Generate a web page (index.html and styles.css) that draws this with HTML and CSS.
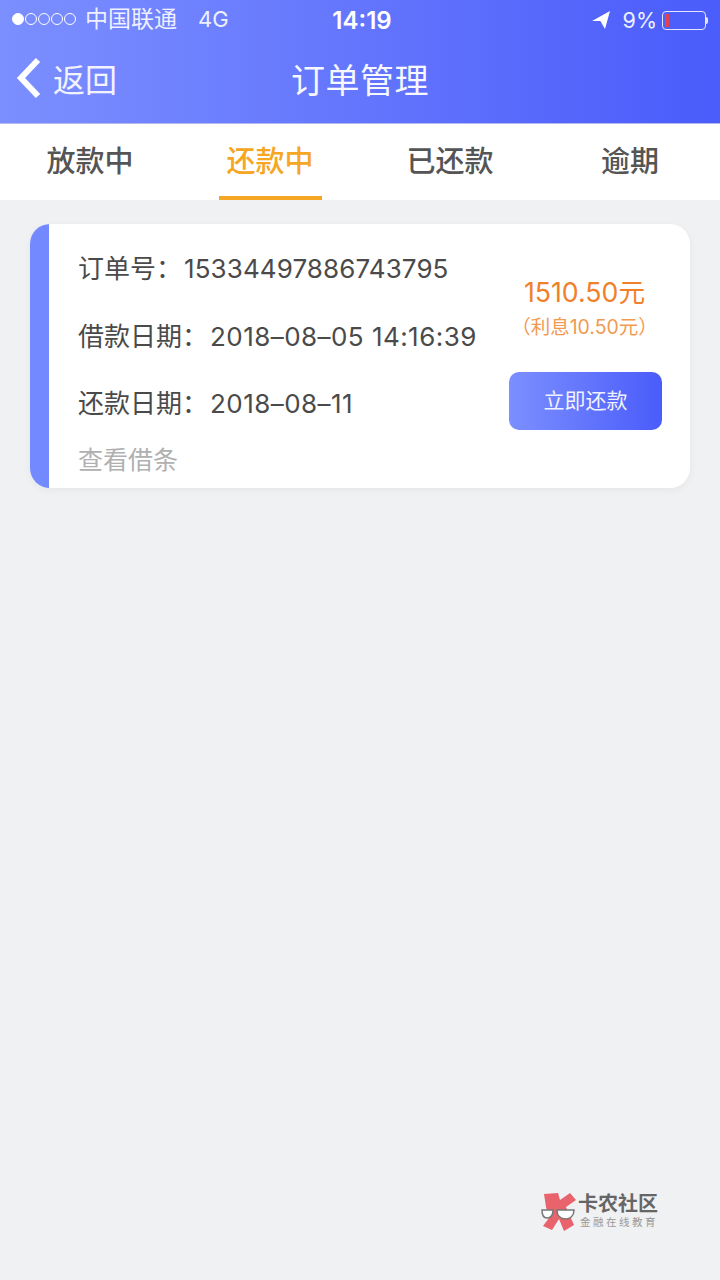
FILE: index.html
```html
<!DOCTYPE html>
<html lang="zh-CN">
<head>
<meta charset="utf-8">
<title>订单管理</title>
<link rel="stylesheet" href="styles.css">
</head>
<body>
<div class="page">
  <header class="header">
    <div class="status">
      <div class="status-left">
        <span class="dots"><i class="dot on"></i><i class="dot"></i><i class="dot"></i><i class="dot"></i><i class="dot"></i></span>
        <span class="carrier">中国联通</span>
        <span class="net">4G</span>
      </div>
      <div class="clock">14:19</div>
      <div class="status-right">
        <svg class="loc" width="18" height="18" viewBox="0 0 18 18"><path d="M18 0 L0 10 L8.4 10 L13 18 Z" fill="#fff"/></svg>
        <span class="pct">9%</span>
        <span class="battery"><span class="level"></span></span>
        <span class="nub"></span>
      </div>
    </div>
    <div class="nav">
      <div class="back">
        <svg width="26" height="42" viewBox="0 0 26 42"><path d="M22 3 L5 21 L22 39" fill="none" stroke="#fff" stroke-width="6"/></svg>
        <span>返回</span>
      </div>
      <h1 class="title">订单管理</h1>
    </div>
  </header>
  <nav class="tabs">
    <div class="tab">放款中</div>
    <div class="tab active">还款中</div>
    <div class="tab">已还款</div>
    <div class="tab">逾期</div>
  </nav>
  <section class="card">
    <div class="card-bar"></div>
    <div class="card-info">
      <div class="row">订单号：<span class="val">15334497886743795</span></div>
      <div class="row">借款日期：<span class="val date">2018–08–05 14:16:39</span></div>
      <div class="row">还款日期：<span class="val date">2018–08–11</span></div>
      <div class="link">查看借条</div>
    </div>
    <div class="card-side">
      <div class="amount">1510.50元</div>
      <div class="interest">（利息10.50元）</div>
      <div class="pay">立即还款</div>
    </div>
  </section>
  <div class="mark">
    <svg width="37" height="39" viewBox="0 0 37 39">
      <path d="M3 2 L17 1 L19 8 L29 1 L35 8 L25 15 L33 33 L23 39 L18 27 L11 38 L2 34 L8 26 L5 15 Z" fill="#e8636c"/>
      <path d="M1 18 H12 C12 24 9 26 6 26 C3 26 1 23 1 18 Z M16 18 H33 C33 24 29 27 25 27 C20 27 16 24 16 18 Z" fill="#fff" stroke="#777" stroke-width="1.5"/>
    </svg>
    <div class="mark-text">
      <div class="mark-name">卡农社区</div>
      <div class="mark-sub">金融在线教育</div>
    </div>
  </div>
</div>
</body>
</html>
```
FILE: styles.css
```css
* { box-sizing: border-box; margin: 0; padding: 0; }
html, body { width: 720px; height: 1280px; overflow: hidden; }
body { font-family: Inter, "Noto Sans CJK SC", sans-serif; background: #f0f1f3; }
.page { position: relative; width: 720px; height: 1280px; display: flex; flex-direction: column; align-items: stretch; }
.header { height: 124px; background: linear-gradient(90deg, #7c8fff 0%, #4a5cfa 100%); color: #fff; border-bottom: 1px solid #b4b9ee; flex: none; }
.status { height: 40px; display: grid; grid-template-columns: 1fr auto 1fr; align-items: center; padding: 0 12px 0 12px; }
.status-left { display: flex; align-items: center; font-size: 22px; color: #eef0ff; line-height: 36px; height: 36px; margin-top: -2px; }
.dots { display: flex; gap: 1px; margin-right: 9px; }
.dot { width: 12px; height: 12px; border-radius: 50%; border: 1px solid #fff; }
.dot.on { background: #fff; }
.carrier { font-size: 23px; }
.net { margin-left: 21px; }
.clock { font-size: 24px; font-weight: 600; padding-left: 4px; }
.status-right { display: flex; align-items: center; justify-content: flex-end; font-size: 21.5px; color: #eef0ff; }
.loc { margin-right: 13px; }
.pct { margin-right: 5px; }
.battery { width: 44px; height: 19px; border: 1px solid #e4e6ff; border-radius: 4px; padding: 2px; display: flex; }
.level { width: 4px; background: #e0434f; }
.nub { width: 2px; height: 7px; background: #e4e6ff; border-radius: 0 2px 2px 0; }
.nav { height: 83px; position: relative; display: flex; align-items: center; justify-content: center; padding-bottom: 7px; }
.back { position: absolute; left: 16px; top: 15px; display: flex; align-items: center; font-size: 32px; gap: 11px; color: #f2f3ff; }
.title { font-size: 34px; font-weight: 400; letter-spacing: .5px; color: #f6f7ff; }
.tabs { height: 76px; background: #fff; display: grid; grid-template-columns: repeat(4, 1fr); flex: none; }
.tab { justify-self: center; width: 103px; height: 76px; text-align: center; line-height: 76px; font-size: 29px; font-weight: 500; color: #555; white-space: nowrap; }
.tab.active { color: #f5a623; border-bottom: 4px solid #f5a623; }
.card { margin: 24px 30px 0; height: 264px; background: #fff; border-radius: 20px; box-shadow: 0 2px 8px rgba(0,0,0,.05); display: flex; overflow: hidden; flex: none; }
.card-bar { width: 19px; background: #7389ff; flex: none; }
.card-info { flex: 1; padding: 24px 0 0 29px; font-size: 26px; color: #4a4a4a; }
.row { height: 67.5px; line-height: 42px; white-space: nowrap; }
.val { margin-left: 2px; letter-spacing: .1px; }
.date { margin-left: 2px; letter-spacing: .45px; }
.link { color: #b0b0b0; font-size: 25px; line-height: 32px; margin-top: -7px; }
.card-side { width: 153px; margin-right: 28px; display: flex; flex-direction: column; align-items: center; padding-top: 50px; color: #f0812a; }
.amount { font-size: 26.7px; line-height: 36px; white-space: nowrap; margin-left: -2px; }
.interest { font-size: 19.5px; line-height: 30px; white-space: nowrap; color: #f39a52; margin: 2px 0 0 -2px; }
.pay { margin-top: 30px; width: 153px; height: 58px; border-radius: 10px; background: linear-gradient(90deg, #7c8fff, #4a5cfa); color: #f0f2ff; font-size: 21px; line-height: 58px; text-align: center; }
.mark { position: absolute; left: 541px; top: 1192px; display: flex; align-items: flex-start; gap: 0; }
.mark-text { padding-top: 1px; }
.mark-name { font-size: 20px; line-height: 22px; font-weight: 700; color: #666; }
.mark-sub { font-size: 10.5px; line-height: 12px; color: #999; letter-spacing: 2.5px; margin: 2px 0 0 2px; white-space: nowrap; }
```
